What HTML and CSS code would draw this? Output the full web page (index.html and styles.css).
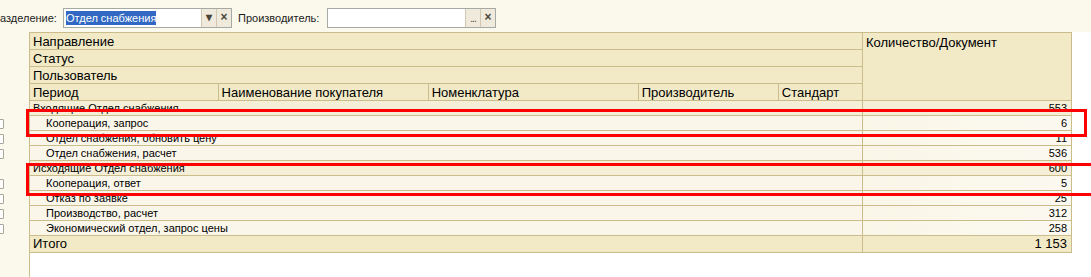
FILE: index.html
```html
<!DOCTYPE html>
<html lang="ru">
<head>
    <meta charset="UTF-8">
    <title>Отчет по документам</title>
    <link rel="stylesheet" href="styles.css">
</head>
<body>
    <div class="toolbar">
        <span class="label label-first">азделение:</span>
        <div class="combo">
            <div class="field"><span class="selected">Отдел снабжения</span></div>
            <span class="btn">&#9662;</span>
            <span class="btn">&times;</span>
        </div>
        <span class="label label-second">Производитель:</span>
        <div class="combo">
            <div class="field"></div>
            <span class="btn dots">...</span>
            <span class="btn">&times;</span>
        </div>
    </div>

    <div class="main">
        <div class="side">
            <div class="side-row"></div>
            <div class="side-row"><span class="expander"></span></div>
            <div class="side-row"><span class="expander"></span></div>
            <div class="side-row"><span class="expander"></span></div>
            <div class="side-row"></div>
            <div class="side-row"><span class="expander"></span></div>
            <div class="side-row"><span class="expander"></span></div>
            <div class="side-row"><span class="expander"></span></div>
            <div class="side-row"><span class="expander"></span></div>
        </div>

        <div class="content">
            <table class="report">
                <colgroup>
                    <col style="width: 188px">
                    <col style="width: 210px">
                    <col style="width: 210px">
                    <col style="width: 140px">
                    <col style="width: 84px">
                    <col style="width: 209px">
                </colgroup>
                <thead>
                    <tr>
                        <th colspan="5">Направление</th>
                        <th rowspan="4" class="qty-head">Количество/Документ</th>
                    </tr>
                    <tr><th colspan="5">Статус</th></tr>
                    <tr><th colspan="5">Пользователь</th></tr>
                    <tr>
                        <th>Период</th>
                        <th>Наименование покупателя</th>
                        <th>Номенклатура</th>
                        <th>Производитель</th>
                        <th>Стандарт</th>
                    </tr>
                </thead>
                <tbody>
                    <tr class="group"><td colspan="5">Входящие Отдел снабжения</td><td class="num">553</td></tr>
                    <tr class="item"><td colspan="5">Кооперация, запрос</td><td class="num">6</td></tr>
                    <tr class="item"><td colspan="5">Отдел снабжения, обновить цену</td><td class="num">11</td></tr>
                    <tr class="item"><td colspan="5">Отдел снабжения, расчет</td><td class="num">536</td></tr>
                    <tr class="group"><td colspan="5">Исходящие Отдел снабжения</td><td class="num">600</td></tr>
                    <tr class="item"><td colspan="5">Кооперация, ответ</td><td class="num">5</td></tr>
                    <tr class="item"><td colspan="5">Отказ по заявке</td><td class="num">25</td></tr>
                    <tr class="item"><td colspan="5">Производство, расчет</td><td class="num">312</td></tr>
                    <tr class="item"><td colspan="5">Экономический отдел, запрос цены</td><td class="num">258</td></tr>
                </tbody>
                <tfoot>
                    <tr class="total"><td colspan="5">Итого</td><td class="num">1 153</td></tr>
                </tfoot>
            </table>
        </div>
    </div>

    <div class="mark mark-first"></div>
    <div class="mark mark-second"></div>
</body>
</html>
```

FILE: styles.css
```css
html, body {
    margin: 0;
    padding: 0;
}
body {
    width: 1091px;
    height: 277px;
    overflow: hidden;
    position: relative;
    font-family: "Liberation Sans", Arial, sans-serif;
    background-color: #fbf8ec;
    color: #000;
}
.toolbar {
    height: 32px;
    box-sizing: border-box;
    padding-top: 8px;
    display: flex;
    align-items: flex-start;
    font-size: 11px;
}
.label {
    line-height: 20px;
    color: #1c1c1c;
}
.label-first {
    width: 63px;
}
.label-second {
    width: 89px;
    margin-left: 6px;
}
.combo {
    display: flex;
    height: 20px;
    box-sizing: border-box;
    border: 1px solid #a7a9a4;
    background-color: #fff;
}
.field {
    width: 137px;
    padding-left: 2px;
    box-sizing: border-box;
    line-height: 18px;
}
.selected {
    background-color: #3068c4;
    color: #fff;
    padding: 1px 0;
}
.btn {
    width: 15px;
    box-sizing: border-box;
    border-left: 1px solid #cfc9b3;
    background-color: #efeadb;
    color: #4a463a;
    text-align: center;
    line-height: 17px;
    font-size: 12px;
    font-weight: bold;
}
.btn.dots {
    line-height: 20px;
    font-size: 10px;
    font-weight: normal;
    letter-spacing: -1px;
}

.main {
    display: flex;
    height: 245px;
}
.side {
    width: 29px;
    padding-top: 69px;
    box-sizing: border-box;
    overflow: hidden;
}
.side-row {
    height: 15px;
    display: flex;
    align-items: center;
}
.expander {
    width: 9px;
    height: 8px;
    margin-left: -7px;
    border: 1px solid #a9a69a;
    border-radius: 1px;
    background-color: #fff;
}
.content {
    flex: 1;
    background-color: #fff;
    border-left: 1px solid #cbbd8b;
}

.report {
    border-collapse: collapse;
    table-layout: fixed;
    width: 1042px;
}
.report th, .report td {
    border: 1px solid #cbbd8b;
    padding: 0 3px;
    overflow: hidden;
    white-space: nowrap;
}
.report tr > :first-child {
    border-left: none;
}
.report th {
    height: 17px;
    font-size: 13px;
    font-weight: normal;
    text-align: left;
    line-height: 15px;
    background-color: #f2eac7;
    padding-top: 1px;
    box-sizing: border-box;
}
.report th.qty-head {
    vertical-align: top;
    padding-top: 2px;
}
.report td {
    height: 14px;
    font-size: 11px;
    line-height: 13px;
}
.report .group td {
    background-color: #f5efd8;
}
.report .item td {
    background-color: #faf6e9;
}
.report .item td:first-child {
    padding-left: 16px;
}
.report .item td.num {
    background: linear-gradient(to right, #faf6e8, #fbf9f0);
}
.report td.num {
    text-align: right;
    padding-right: 4px;
}
.report .total td {
    height: 16px;
    font-size: 13px;
    line-height: 16px;
    background-color: #f2eac7;
}

.mark {
    position: absolute;
    border: 3px solid #f00;
    box-sizing: border-box;
}
.mark-first {
    left: 26px;
    top: 109px;
    width: 1061px;
    height: 28px;
}
.mark-second {
    left: 26px;
    top: 163px;
    width: 1080px;
    height: 33px;
}
```
